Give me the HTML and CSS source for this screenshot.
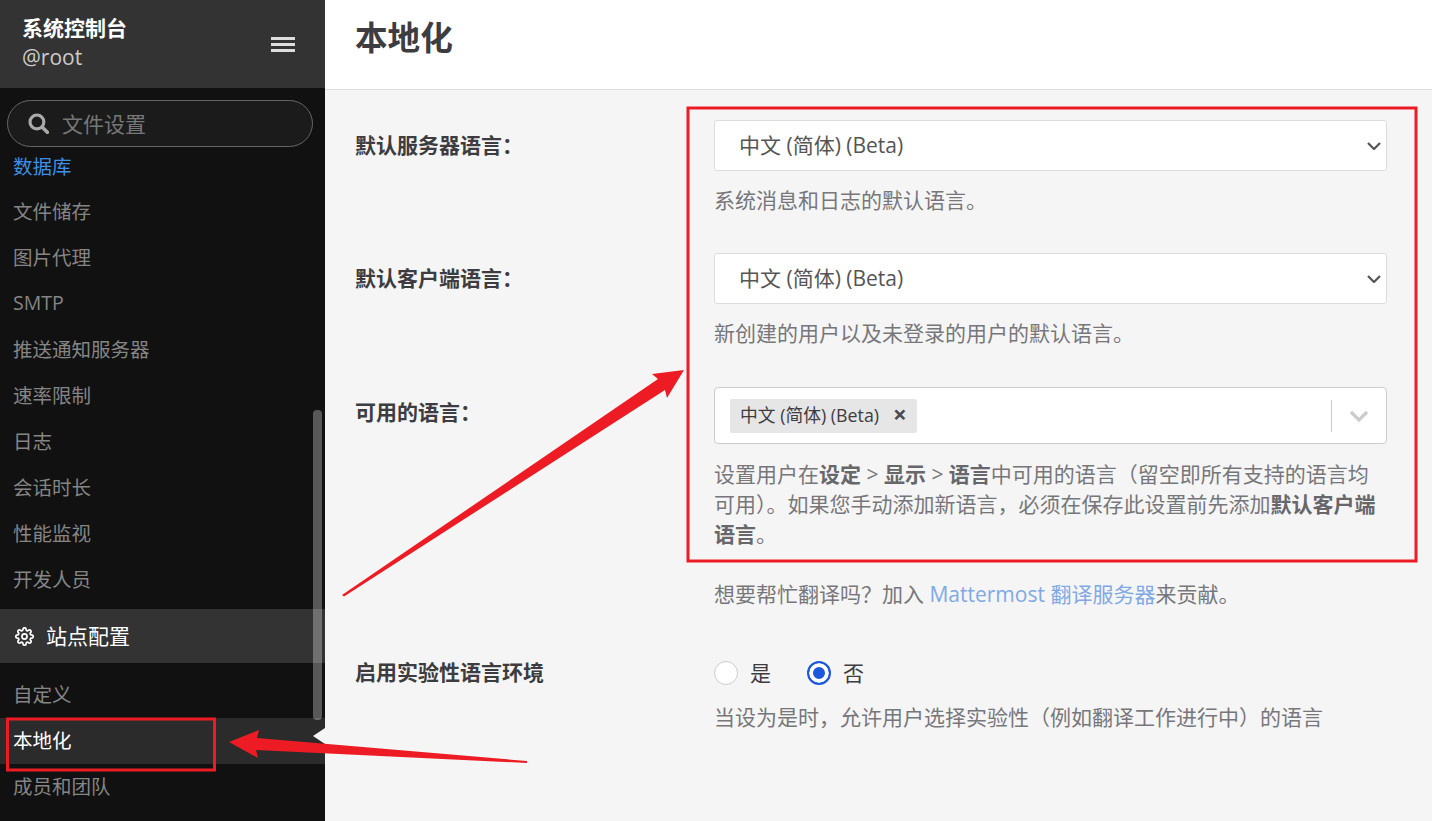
FILE: index.html
```html
<!DOCTYPE html>
<html lang="zh-CN">
<head>
<meta charset="utf-8">
<title>本地化</title>
<link rel="stylesheet" href="styles.css">
</head>
<body>
<div class="app">
  <aside class="sidebar">
    <header class="side-head">
      <div class="side-id">
        <div class="side-title">系统控制台</div>
        <div class="side-user">@root</div>
      </div>
      <div class="burger"><span></span><span></span><span></span></div>
    </header>
    <div class="side-body">
      <div class="search">
        <svg class="search-icon" viewBox="0 0 20 20" aria-hidden="true"><circle cx="8.5" cy="8.5" r="6.6" fill="none" stroke="#aaa" stroke-width="3"/><path d="M13.4 13.4 18.4 18.4" stroke="#aaa" stroke-width="3.4" stroke-linecap="round"/></svg>
        <span>文件设置</span>
      </div>
      <nav class="nav">
        <a class="nav-item nav-link-blue">数据库</a>
        <a class="nav-item">文件储存</a>
        <a class="nav-item">图片代理</a>
        <a class="nav-item">SMTP</a>
        <a class="nav-item">推送通知服务器</a>
        <a class="nav-item">速率限制</a>
        <a class="nav-item">日志</a>
        <a class="nav-item">会话时长</a>
        <a class="nav-item">性能监视</a>
        <a class="nav-item">开发人员</a>
        <div class="nav-section">
          <svg class="gear" viewBox="0 0 24 24" aria-hidden="true"><circle cx="12" cy="12" r="3.2" fill="none" stroke="#fff" stroke-width="2.2"/><path fill="none" stroke="#fff" stroke-width="2.2" d="M19.4 15a1.65 1.65 0 0 0 .33 1.82l.06.06a2 2 0 0 1 0 2.83 2 2 0 0 1-2.83 0l-.06-.06a1.65 1.65 0 0 0-1.82-.33 1.65 1.65 0 0 0-1 1.51V21a2 2 0 0 1-2 2 2 2 0 0 1-2-2v-.09A1.65 1.65 0 0 0 9 19.4a1.65 1.65 0 0 0-1.82.33l-.06.06a2 2 0 0 1-2.83 0 2 2 0 0 1 0-2.83l.06-.06a1.65 1.65 0 0 0 .33-1.82 1.65 1.65 0 0 0-1.51-1H3a2 2 0 0 1-2-2 2 2 0 0 1 2-2h.09A1.65 1.65 0 0 0 4.6 9a1.65 1.65 0 0 0-.33-1.82l-.06-.06a2 2 0 0 1 0-2.83 2 2 0 0 1 2.83 0l.06.06a1.65 1.65 0 0 0 1.82.33H9a1.65 1.65 0 0 0 1-1.51V3a2 2 0 0 1 2-2 2 2 0 0 1 2 2v.09a1.65 1.65 0 0 0 1 1.51 1.65 1.65 0 0 0 1.82-.33l.06-.06a2 2 0 0 1 2.83 0 2 2 0 0 1 0 2.83l-.06.06a1.65 1.65 0 0 0-.33 1.82V9a1.65 1.65 0 0 0 1.51 1H21a2 2 0 0 1 2 2 2 2 0 0 1-2 2h-.09a1.65 1.65 0 0 0-1.51 1z"/></svg>
          <span>站点配置</span>
        </div>
        <a class="nav-item nav-low nav-first">自定义</a>
        <a class="nav-item nav-low nav-active">本地化</a>
        <a class="nav-item nav-low">成员和团队</a>
      </nav>
      <div class="thumb"></div>
      <div class="caret"></div>
    </div>
  </aside>
  <main class="main">
    <header class="main-head"><h1>本地化</h1></header>
    <div class="form">
      <div class="row row-a">
        <label class="label label-tall">默认服务器语言：</label>
        <div class="field">
          <div class="select-wrap">
            <select class="select"><option>中文 (简体) (Beta)</option></select>
            <svg class="select-chevron" viewBox="0 0 14 8" aria-hidden="true"><path d="M1 1 7 7 13 1" fill="none" stroke="#555" stroke-width="2.2"/></svg>
          </div>
          <p class="help">系统消息和日志的默认语言。</p>
        </div>
      </div>
      <div class="row row-b">
        <label class="label label-tall">默认客户端语言：</label>
        <div class="field">
          <div class="select-wrap">
            <select class="select"><option>中文 (简体) (Beta)</option></select>
            <svg class="select-chevron" viewBox="0 0 14 8" aria-hidden="true"><path d="M1 1 7 7 13 1" fill="none" stroke="#555" stroke-width="2.2"/></svg>
          </div>
          <p class="help">新创建的用户以及未登录的用户的默认语言。</p>
        </div>
      </div>
      <div class="row">
        <label class="label label-tall">可用的语言：</label>
        <div class="field">
          <div class="multi">
            <span class="chip">中文 (简体) (Beta)<b class="chip-x">×</b></span>
            <span class="multi-end">
              <svg class="multi-chevron" viewBox="0 0 20 12" aria-hidden="true"><path d="M2 2 10 10 18 2" fill="none" stroke="#ccc" stroke-width="3.2"/></svg>
            </span>
          </div>
          <p class="help">设置用户在<b>设定</b> &gt; <b>显示</b> &gt; <b>语言</b>中可用的语言（留空即所有支持的语言均可用）。如果您手动添加新语言，必须在保存此设置前先添加<b>默认客户端语言</b>。</p>
          <p class="help help-gap">想要帮忙翻译吗？加入 <a class="link">Mattermost 翻译服务器</a>来贡献。</p>
        </div>
      </div>
      <div class="row row-radio">
        <label class="label">启用实验性语言环境</label>
        <div class="field">
          <div class="radios">
            <span class="radio-opt"><i class="radio"></i><span class="radio-text">是</span></span>
            <span class="radio-opt"><i class="radio radio-on"></i><span class="radio-text">否</span></span>
          </div>
          <p class="help">当设为是时，允许用户选择实验性（例如翻译工作进行中）的语言</p>
        </div>
      </div>
    </div>
  </main>
</div>
<svg class="annot" viewBox="0 0 1432 821" aria-hidden="true">
  <rect x="688" y="108" width="728" height="453" fill="none" stroke="#ed1c24" stroke-width="3"/>
  <rect x="7.5" y="719" width="207" height="51" fill="none" stroke="#ed1c24" stroke-width="3"/>
  <polygon fill="#ed1c24" points="342,595 344,596.5 665,390 667,398 684,370 652,374 658,379"/>
  <polygon fill="#ed1c24" points="527,763 527,761 257,738 259,730 229,742 258,758 256,750"/>
</svg>
</body>
</html>
```
FILE: styles.css
```css
* { box-sizing: border-box; }
html, body { margin: 0; height: 100%; overflow: hidden; }
body {
  font-family: "Open Sans", "Noto Sans CJK SC", sans-serif;
  color: #3d3c40;
  background: #f5f5f5;
}
.app { display: flex; height: 821px; }

/* Sidebar */
.sidebar { width: 325px; flex: none; display: flex; flex-direction: column; background: #111; }
.side-head {
  height: 88px; flex: none; background: #333;
  display: flex; align-items: center; justify-content: space-between;
  padding: 0 30px 0 22px;
}
.side-id { margin-bottom: 4px; }
.side-title { font-size: 21px; font-weight: 700; color: #fff; line-height: 30px; }
.side-user { font-size: 21px; color: #ccc; line-height: 29px; }
.burger { display: flex; flex-direction: column; gap: 3px; width: 24px; }
.burger span { height: 3px; background: #ddd; }
.side-body { position: relative; flex: 1; overflow: hidden; padding-top: 12px; }
.search {
  height: 47px; margin: 0 12px 0 7px; padding: 0 0 2px 20px;
  border: 1px solid #666; border-radius: 24px;
  background: #1b1b1b; color: #777; font-size: 21px;
  display: flex; align-items: center; gap: 13px;
}
.search-icon { width: 21px; height: 21px; margin-top: 2px; }
.nav { display: flex; flex-direction: column; }
.nav-item { height: 46px; display: flex; align-items: center; padding: 0 0 2px 13px; font-size: 19.5px; color: #858585; }
.nav-low { padding-bottom: 4px; }
.nav-link-blue { color: #3d8fe8; height: 41px; padding-bottom: 4px; }
.nav-section {
  height: 54px; margin-top: 7px; background: #333; color: #fff; font-size: 21px;
  display: flex; align-items: center; gap: 12px; padding: 0 0 2px 15px;
}
.gear { width: 19px; height: 19px; margin-top: 2px; }
.nav-first { margin-top: 9px; }
.nav-active { background: #2b2b2b; color: #fff; }
.thumb {
  position: absolute; left: 313px; top: 322px; width: 9px; height: 310px;
  border-radius: 4px; background: rgba(255, 255, 255, .3);
}
.caret {
  position: absolute; right: 0; top: 640px; width: 0; height: 0;
  border: 8px solid transparent; border-left-width: 0; border-right: 12px solid #f5f5f5;
}

/* Main */
.main { flex: 1; min-width: 0; display: flex; flex-direction: column; }
.main-head { height: 90px; flex: none; background: #fff; border-bottom: 1px solid #ddd; padding-left: 30px; }
.main-head h1 { margin: 0; font-size: 32.6px; font-weight: 700; line-height: 76px; color: #3d3c40; }
.form { padding: 30px 45px 0 30px; }
.row { display: grid; grid-template-columns: 359px 673px; }
.row-a { margin-bottom: 37px; }
.row-b { margin-bottom: 38px; }
.row-radio { margin-top: 49px; }
.label { font-size: 21px; font-weight: 700; line-height: 28px; color: #3d3c40; }
.label-tall { line-height: 50px; }
.select-wrap { position: relative; }
.select {
  display: block; width: 673px; height: 51px; padding: 0 24px 2px;
  appearance: none; -webkit-appearance: none;
  border: 1px solid #ddd; border-radius: 3px; background-color: #fff;
  font: 400 21px "Open Sans", "Noto Sans CJK SC", sans-serif; color: #555;
}
.select-chevron { position: absolute; right: 6px; top: 22px; width: 14px; height: 8px; pointer-events: none; }
.help { margin: 15px 0 0; font-size: 21px; line-height: 30px; color: #77777b; }
.row-a .help, .row-b .help, .row-radio .help { margin: 14px 0 1px; }
.help b { font-weight: 700; color: #67676b; }
.help-gap { margin-top: 30px; }
.link { color: #80a9e4; }
.multi {
  height: 57px; display: flex; align-items: center; justify-content: space-between;
  padding-left: 15px; background: #fff; border: 1px solid #ccc; border-radius: 4px;
}
.chip {
  height: 34px; display: inline-flex; align-items: center; padding: 0 10px 4px;
  background: #e6e6e6; border-radius: 2px; font-size: 17.8px; color: #3d3c40;
}
.chip-x { margin-left: 14px; font-size: 24px; font-weight: 700; line-height: 1; color: #4a4a50; }
.multi-end { width: 55px; height: 32px; border-left: 1px solid #ccc; display: flex; align-items: center; justify-content: center; }
.multi-chevron { width: 20px; height: 12px; }
.radios { display: flex; align-items: center; gap: 36px; height: 30px; }
.radio-opt { display: inline-flex; align-items: center; gap: 12px; font-size: 21px; color: #3d3c40; }
.radio-text { padding-bottom: 2px; }
.radio { width: 24px; height: 24px; border-radius: 50%; background: #fff; border: 1px solid #ccc; }
.radio-on { border: 2px solid #1c58d9; box-shadow: inset 0 0 0 4px #fff; background: #1c58d9; }

/* Annotation layer over the screenshot */
.annot { position: absolute; left: 0; top: 0; width: 1432px; height: 821px; pointer-events: none; }
```
